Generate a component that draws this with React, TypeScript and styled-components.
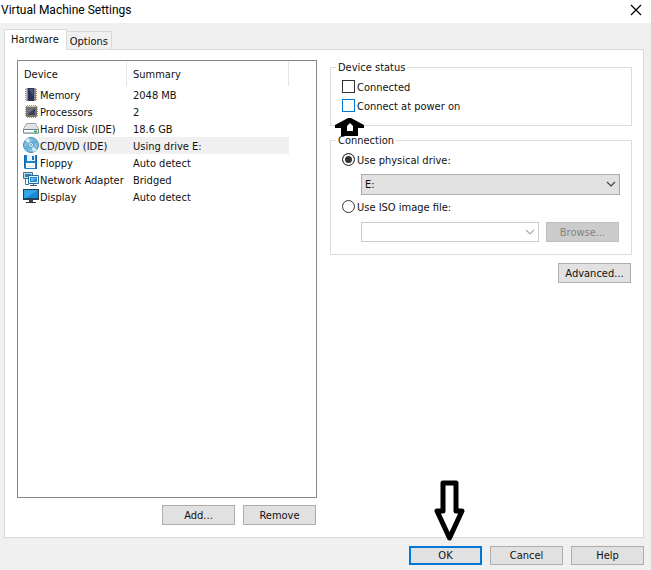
import React, { useState } from "react";
import styled, { createGlobalStyle } from "styled-components";

const GlobalStyle = createGlobalStyle`
  *, *::before, *::after { box-sizing: border-box; }
  body {
    margin: 0;
    background: #f0f0f0;
    color: #111;
    font: 11px/14px "DejaVu Sans Condensed", "DejaVu Sans", sans-serif;
    font-stretch: condensed;
  }
  button, input, select { font: inherit; color: inherit; margin: 0; }
`;

const Window = styled.div`
  display: flex;
  flex-direction: column;
  min-height: 100vh;
`;

const TitleBar = styled.header`
  display: flex;
  align-items: center;
  justify-content: space-between;
  height: 23px;
  padding: 0 9px 3px 1px;
  background: #fff;
`;

const Title = styled.h1`
  margin: 0;
  font: 400 12px/16px Roboto, sans-serif;
  color: #000;
`;

const CloseButton = styled.button`
  display: flex;
  padding: 0;
  border: 0;
  background: none;
`;

const Body = styled.main`
  display: flex;
  flex: 1;
  flex-direction: column;
  padding: 6px 7px 5px 4px;
`;

const TabList = styled.div`
  display: flex;
  align-items: flex-end;
`;

const Tab = styled.button<{ $active: boolean }>`
  position: relative;
  z-index: ${(p) => (p.$active ? 1 : 0)};
  height: ${(p) => (p.$active ? 21 : 18)}px;
  margin-bottom: ${(p) => (p.$active ? -1 : 0)}px;
  padding: ${(p) => (p.$active ? "0 7px 0 6px" : "2px 3px 0")};
  border: 1px solid #d9d9d9;
  border-left-width: ${(p) => (p.$active ? 1 : 0)}px;
  border-bottom: 0;
  background: ${(p) => (p.$active ? "#fff" : "#f0f0f0")};
  white-space: nowrap;
`;

const Panel = styled.div`
  display: grid;
  flex: 1;
  grid-template-columns: minmax(0, 300fr) minmax(0, 302fr);
  gap: 13px;
  padding: 10px 11px 12px 12px;
  border: 1px solid #d9d9d9;
  background: #fff;
`;

const Column = styled.div`
  display: flex;
  flex-direction: column;
`;

const ListBox = styled.div`
  flex: 1;
  border: 1px solid #828790;
  background: #fff;
`;

const DeviceTable = styled.table`
  width: 271px;
  table-layout: fixed;
  border-collapse: separate;
  border-spacing: 0;
  text-align: left;
`;

const HeaderCell = styled.th<{ $width: number }>`
  width: ${(p) => p.$width}px;
  height: 25px;
  padding: 2px 6px 0;
  border-right: 1px solid #e5e5e5;
  font-weight: 400;
`;

const DeviceRow = styled.tr<{ $selected: boolean }>`
  --row-fill: ${(p) => (p.$selected ? "#f0f0f0" : "transparent")};
  height: 17px;
`;

const DeviceCell = styled.td`
  padding: 0 0 0 5px;
`;

const DeviceName = styled.div`
  display: flex;
  height: 17px;
  white-space: nowrap;
`;

const DeviceLabel = styled.span`
  flex: 1;
  padding: 2px 0 0 1px;
  background: var(--row-fill);
  line-height: 15px;
`;

const SummaryCell = styled.td`
  padding: 2px 6px 0;
  background: var(--row-fill);
  line-height: 15px;
`;

const ButtonRow = styled.div<{ $top: number }>`
  display: flex;
  justify-content: flex-end;
  gap: 8px;
  padding: ${(p) => p.$top}px 1px 0 0;
`;

const Button = styled.button<{ $primary?: boolean; $short?: boolean }>`
  width: 73px;
  height: ${(p) => (p.$short ? 19 : 20)}px;
  padding: 1px 0 0;
  border: ${(p) => (p.$primary ? "2px solid #0078d7" : "1px solid #adadad")};
  background: #e1e1e1;
  line-height: 14px;
  &:disabled {
    border-color: #bfbfbf;
    background: #ccc;
    color: #838383;
  }
`;

const Group = styled.fieldset<{ $bottom: number }>`
  position: relative;
  display: block;
  min-width: 0;
  margin: 0 0 7px;
  padding: 3px 11px ${(p) => p.$bottom}px;
  border: 1px solid #dcdcdc;
`;

const Legend = styled.legend`
  height: 14px;
  margin-left: -6px;
  padding: 1px 2px 0;
  line-height: 14px;
`;

const Option = styled.label`
  display: flex;
  align-items: center;
  gap: 2px;
  width: max-content;
  height: 19px;
  padding-top: 2px;
  input { margin-bottom: 2px; }
`;

const Checkbox = styled.input<{ $hot?: boolean }>`
  appearance: none;
  width: 13px;
  height: 13px;
  border: 1px solid ${(p) => (p.$hot ? "#0078d7" : "#333")};
  background: #fff;
  &:checked { box-shadow: inset 0 0 0 2px #fff; background: #333; }
`;

const Radio = styled.input`
  appearance: none;
  width: 13px;
  height: 13px;
  border: 1px solid #333;
  border-radius: 50%;
  background: #fff;
  &:checked { box-shadow: inset 0 0 0 2px #fff; background: #333; }
`;

const FieldRow = styled.div<{ $before: number; $after: number }>`
  display: flex;
  gap: 7px;
  margin: ${(p) => p.$before}px 0 ${(p) => p.$after}px 19px;
`;

const SelectBox = styled.div`
  position: relative;
  display: flex;
  flex: 1;
  svg { position: absolute; right: 4px; top: 7px; pointer-events: none; }
`;

const Select = styled.select`
  appearance: none;
  width: 100%;
  height: 21px;
  padding: 1px 20px 0 3px;
  border: 1px solid #adadad;
  border-radius: 0;
  background: #e1e1e1;
  &:disabled {
    height: 20px;
    border-color: #ccc;
    background: #fff;
    opacity: 1;
  }
`;

const Inset = styled.div`
  display: flex;
  padding-right: 1px;
`;

const Footer = styled.footer`
  display: flex;
  justify-content: flex-end;
  gap: 8px;
  padding-top: 8px;
`;

const PrimarySlot = styled.div`
  position: relative;
  display: flex;
`;

const UpArrow = styled.svg`
  position: absolute;
  left: 4px;
  bottom: -11px;
`;

const DownArrow = styled.svg`
  position: absolute;
  left: 25px;
  bottom: 23px;
`;

function MemoryIcon() {
  return (
    <svg width="16" height="16" viewBox="0 0 16 16" aria-hidden="true">
      <path d="M2 3.500h12M2 5.500h12M2 7.500h12M2 9.500h12M2 11.500h12M2 13.500h12" stroke="#a08a5c" />
      <rect x="3" y="2" width="10" height="13" rx="1" fill="#8b8a94" />
      <rect x="5" y="2" width="6" height="13" fill="#2c3354" />
      <path d="M6 3h4v7z" fill="#4b5780" />
      <path d="M3.500 3v11" stroke="#bdbac6" />
    </svg>
  );
}

function ProcessorIcon() {
  return (
    <svg width="16" height="16" viewBox="0 0 16 16" aria-hidden="true">
      <path d="M4.500 2v13M6.500 2v13M8.500 2v13M10.500 2v13M12.500 2v13M2 4.500h13M2 6.500h13M2 8.500h13M2 10.500h13M2 12.500h13" stroke="#a39468" />
      <rect x="3" y="3" width="11" height="11" rx="1" fill="#7b7464" />
      <rect x="5" y="5" width="7" height="7" fill="#3c4158" />
      <path d="M5 5h7L5 11z" fill="#686f87" />
      <path d="M4 3.500h9" stroke="#c9bd95" />
    </svg>
  );
}

function DiskIcon() {
  return (
    <svg width="16" height="16" viewBox="0 0 16 16" aria-hidden="true">
      <path d="M3.500 3.500h9l3 5.500v4H.5V9z" fill="#edf0f2" stroke="#99a2aa" />
      <path d="M4 4h8l2.500 5h-13z" fill="#dfe3e6" />
      <path d="M.5 9.500h15V13H.5z" fill="#fbfcfc" stroke="#6d8795" />
      <path d="M11 11.500h3" stroke="#28b446" strokeWidth="2" />
    </svg>
  );
}

function DiscIcon() {
  return (
    <svg width="16" height="16" viewBox="0 0 16 16" aria-hidden="true">
      <circle cx="8" cy="8" r="7.500" fill="#80bedf" stroke="#4388b7" />
      <path d="M8 8L2 3a8 8 0 0 1 4-2zM8 8l6 5a8 8 0 0 1-4 2z" fill="#d1f0ec" />
      <path d="M8 8l3-7a8 8 0 0 1 4 5zM8 8l-3 7a8 8 0 0 1-4-5z" fill="#63b3dc" />
      <circle cx="8" cy="8" r="2.500" fill="#eff9fc" stroke="#4a93ba" />
      <circle cx="8" cy="8" r="1" fill="#779eaf" />
    </svg>
  );
}

function FloppyIcon() {
  return (
    <svg width="16" height="16" viewBox="0 0 16 16" aria-hidden="true">
      <path d="M1 1h13v14H2l-1-1z" fill="#1b80cd" />
      <path d="M1.500 1v13M13.500 1v14" stroke="#1465a8" />
      <path d="M4 1h8v6H4z" fill="#e8f5fd" />
      <path d="M9 2h2v4H9z" fill="#1874b6" />
      <path d="M3 9h9v5H3z" fill="#fff" />
      <path d="M4 12.500h7" stroke="#cfe3f0" />
    </svg>
  );
}

function NetworkIcon() {
  return (
    <svg width="16" height="16" viewBox="0 0 16 16" aria-hidden="true">
      <path d="M.5 1.500h9v6h-9z" fill="#b7dbef" stroke="#446f8c" />
      <path d="M2 3h6v3H2z" fill="#377fae" />
      <path d="M2.500 8v5.500H6" fill="none" stroke="#4d7188" />
      <path d="M5.500 4.500h10v8h-10z" fill="#e7f6ff" stroke="#286d9b" />
      <path d="M7 6h7v5H7z" fill="#248bd0" />
      <path d="M8 7h5l-3 3H8z" fill="#6bbcf0" />
      <path d="M10.500 12v2M7 14.500h7" stroke="#315f7c" />
    </svg>
  );
}

function DisplayIcon() {
  return (
    <svg width="16" height="16" viewBox="0 0 16 16" aria-hidden="true">
      <path d="M0 1h16v11H0z" fill="#263f50" />
      <path d="M1 2h14v8H1z" fill="#148bd5" />
      <path d="M1 2h14L3 10H1z" fill="#32a6e9" />
      <path d="M6 12h4v2H6z" fill="#38454d" />
      <path d="M3 14.500h10" stroke="#26333c" />
    </svg>
  );
}

function Chevron({ color }: { color: string }) {
  return (
    <svg width="10" height="7" viewBox="0 0 10 7" aria-hidden="true">
      <path d="M1 1l4 4 4-4" fill="none" stroke={color} strokeWidth="1.200" />
    </svg>
  );
}

const devices = [
  { name: "Memory", summary: "2048 MB", Icon: MemoryIcon },
  { name: "Processors", summary: "2", Icon: ProcessorIcon },
  { name: "Hard Disk (IDE)", summary: "18.6 GB", Icon: DiskIcon },
  { name: "CD/DVD (IDE)", summary: "Using drive E:", Icon: DiscIcon },
  { name: "Floppy", summary: "Auto detect", Icon: FloppyIcon },
  { name: "Network Adapter", summary: "Bridged", Icon: NetworkIcon },
  { name: "Display", summary: "Auto detect", Icon: DisplayIcon },
];

export default function App() {
  const [selected, setSelected] = useState("CD/DVD (IDE)");
  const [source, setSource] = useState("physical");
  const physical = source === "physical";

  return (
    <Window>
      <GlobalStyle />
      <TitleBar>
        <Title>Virtual Machine Settings</Title>
        <CloseButton type="button" aria-label="Close">
          <svg width="12" height="12" viewBox="0 0 12 12" aria-hidden="true">
            <path d="M1 1l10 10M11 1L1 11" stroke="#000" strokeWidth="1.200" />
          </svg>
        </CloseButton>
      </TitleBar>
      <Body>
        <TabList role="tablist">
          <Tab type="button" role="tab" aria-selected="true" $active>Hardware</Tab>
          <Tab type="button" role="tab" aria-selected="false" $active={false}>Options</Tab>
        </TabList>
        <Panel role="tabpanel">
          <Column>
            <ListBox>
              <DeviceTable>
                <thead>
                  <tr>
                    <HeaderCell $width={109}>Device</HeaderCell>
                    <HeaderCell $width={162}>Summary</HeaderCell>
                  </tr>
                </thead>
                <tbody>
                  {devices.map(({ name, summary, Icon }) => (
                    <DeviceRow key={name} $selected={name === selected} onClick={() => setSelected(name)}>
                      <DeviceCell>
                        <DeviceName>
                          <Icon />
                          <DeviceLabel>{name}</DeviceLabel>
                        </DeviceName>
                      </DeviceCell>
                      <SummaryCell>{summary}</SummaryCell>
                    </DeviceRow>
                  ))}
                </tbody>
              </DeviceTable>
            </ListBox>
            <ButtonRow $top={7}>
              <Button type="button">Add...</Button>
              <Button type="button">Remove</Button>
            </ButtonRow>
          </Column>
          <Column>
            <Group $bottom={10}>
              <Legend>Device status</Legend>
              <Option><Checkbox type="checkbox" />Connected</Option>
              <Option><Checkbox type="checkbox" $hot />Connect at power on</Option>
              <UpArrow width="30" height="18" viewBox="0 0 30 18" aria-hidden="true">
                <path d="M13 0h3l13 7v3h-6v8H6v-8H0V7z" fill="#000" />
                <path d="M12 8l3-3 3 3v5h-6z" fill="#fff" />
              </UpArrow>
            </Group>
            <Group $bottom={12}>
              <Legend>Connection</Legend>
              <Option>
                <Radio type="radio" name="source" checked={physical} onChange={() => setSource("physical")} />
                Use physical drive:
              </Option>
              <FieldRow $before={5} $after={2}>
                <SelectBox>
                  <Select aria-label="Physical drive" disabled={!physical}>
                    <option>E:</option>
                  </Select>
                  <Chevron color="#444" />
                </SelectBox>
              </FieldRow>
              <Option>
                <Radio type="radio" name="source" checked={!physical} onChange={() => setSource("iso")} />
                Use ISO image file:
              </Option>
              <FieldRow $before={6} $after={0}>
                <SelectBox>
                  <Select aria-label="ISO image file" disabled={physical}>
                    <option></option>
                  </Select>
                  <Chevron color="#aaa" />
                </SelectBox>
                <Inset>
                  <Button type="button" disabled={physical}>Browse...</Button>
                </Inset>
              </FieldRow>
            </Group>
            <ButtonRow $top={1}>
              <Button type="button">Advanced...</Button>
            </ButtonRow>
          </Column>
        </Panel>
        <Footer>
          <PrimarySlot>
            <Button type="button" $primary $short>OK</Button>
            <DownArrow width="32" height="63" viewBox="0 0 32 63" aria-hidden="true">
              <path d="M9 4h13v28h6L15.500 59 3 32h6z" fill="#fff" stroke="#000" strokeWidth="5" strokeLinejoin="round" />
            </DownArrow>
          </PrimarySlot>
          <Button type="button" $short>Cancel</Button>
          <Button type="button" $short>Help</Button>
        </Footer>
      </Body>
    </Window>
  );
}
